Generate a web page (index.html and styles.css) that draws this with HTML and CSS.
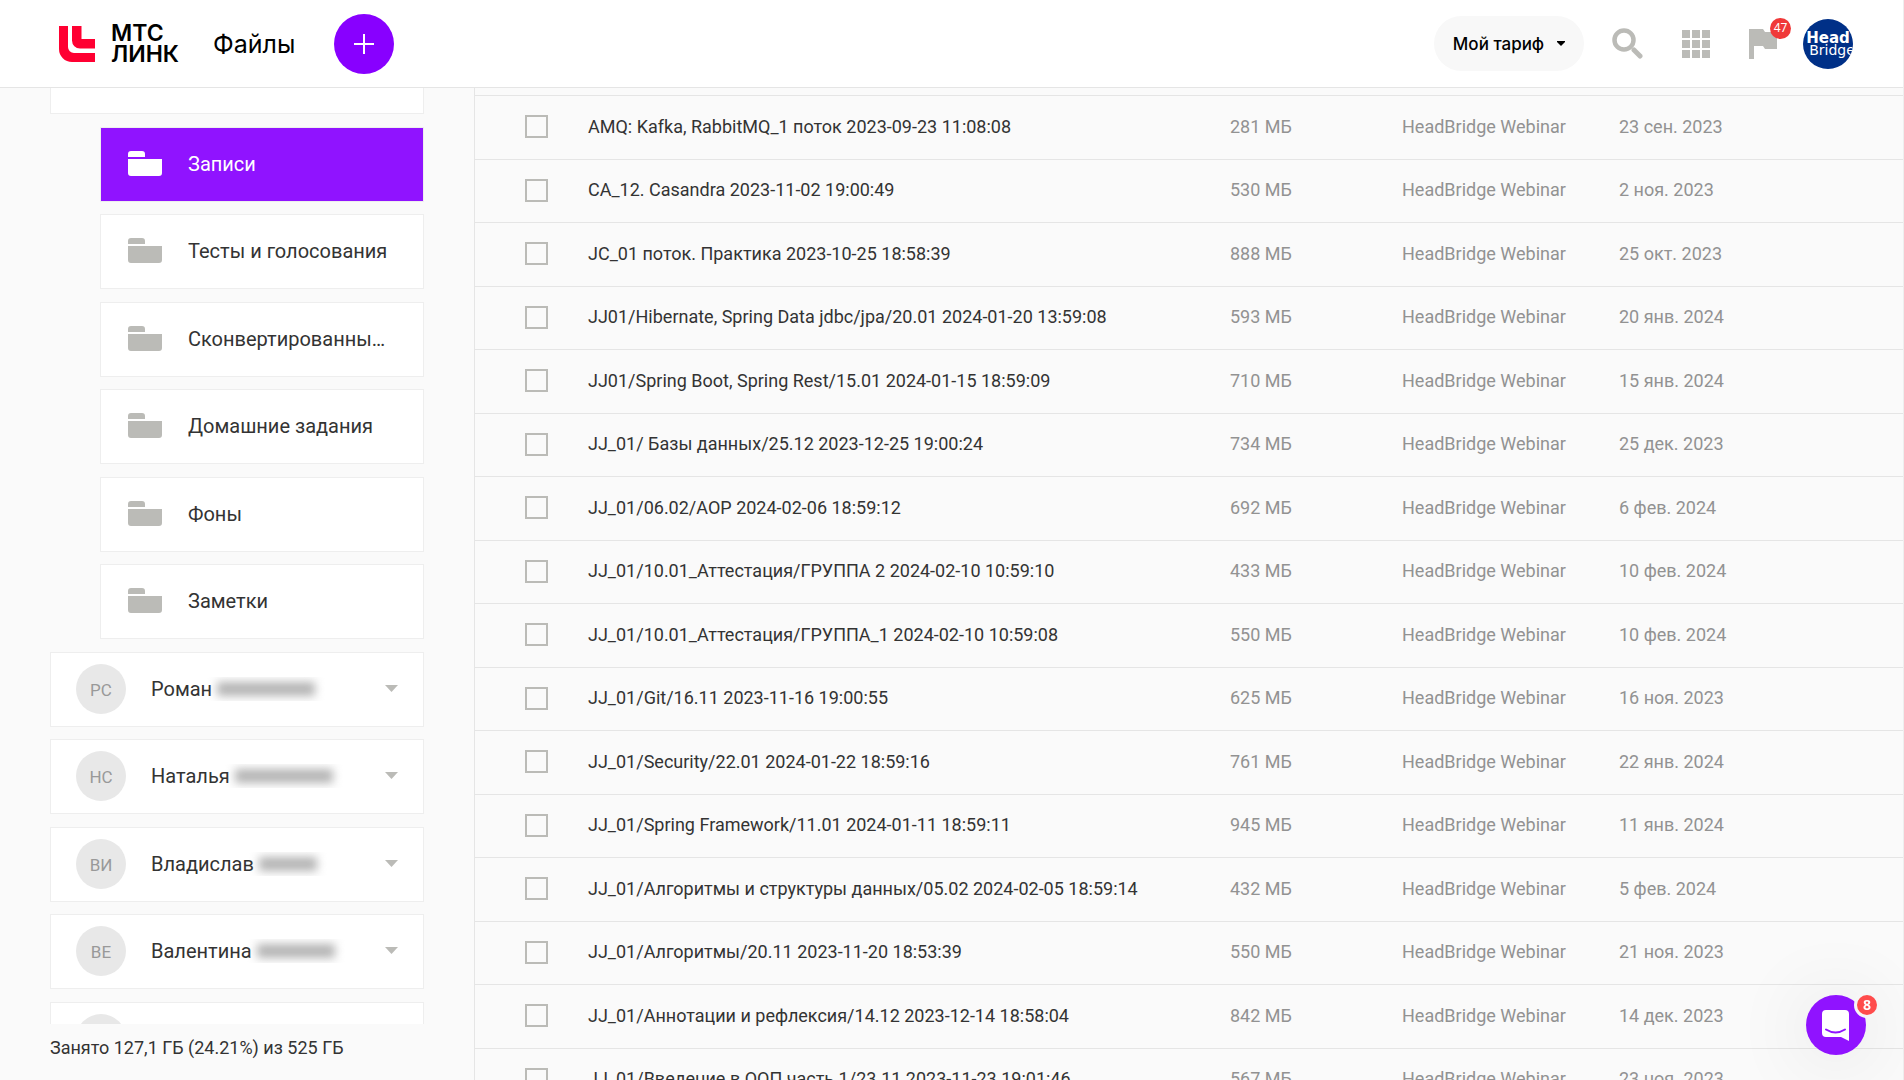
FILE: index.html
```html
<!DOCTYPE html>
<html lang="ru">
<head>
<meta charset="utf-8">
<meta name="viewport" content="width=device-width, initial-scale=1">
<title>Файлы</title>
<link rel="stylesheet" href="styles.css">
</head>
<body>
<svg class="sprite" aria-hidden="true">
  <symbol id="folder" viewBox="0 0 34 25"><path d="M0 6V3a3 3 0 0 1 3-3h11a3 3 0 0 1 3 3v3zM0 8h34v14a3 3 0 0 1-3 3H3a3 3 0 0 1-3-3z"/></symbol>
  <symbol id="caret" viewBox="0 0 13 7"><path d="M0 0h13L6.500 7z"/></symbol>
</svg>

<header class="topbar">
  <a class="logo" href="#">
    <svg class="logo-mark" viewBox="0 0 36 36" aria-hidden="true"><path d="M0 0h9v21a6 6 0 0 0 6 6h21v9H13A13 13 0 0 1 0 23zM13 0h9.500v13H36v9.500H21a8 8 0 0 1-8-8z"/></svg>
    <span class="logo-text">МТС<br>ЛИНК</span>
  </a>
  <h1 class="title">Файлы</h1>
  <button class="add" type="button" aria-label="Добавить"><svg viewBox="0 0 20 20" aria-hidden="true"><path d="M10 0v20M0 10h20"/></svg></button>
  <div class="tools">
    <button class="plan" type="button">Мой тариф <svg viewBox="0 0 8 5" aria-hidden="true"><path d="M0 0h8v1L4 5 0 1z"/></svg></button>
    <button class="tool" type="button" aria-label="Поиск"><svg width="31" height="31" viewBox="0 0 31 31" aria-hidden="true"><circle cx="12" cy="12" r="9.500" fill="none" stroke="currentColor" stroke-width="4.500"/><path d="M22 22l6 6" stroke="currentColor" stroke-width="5" stroke-linecap="round"/></svg></button>
    <button class="tool" type="button" aria-label="Сервисы"><svg width="28" height="28" viewBox="0 0 28 28" aria-hidden="true"><path fill="currentColor" d="M0 0h8v8H0zM10 0h8v8h-8zM20 0h8v8h-8zM0 10h8v8H0zM10 10h8v8h-8zM20 10h8v8h-8zM0 20h8v8H0zM10 20h8v8h-8zM20 20h8v8h-8z"/></svg></button>
    <button class="tool flag" type="button" aria-label="Уведомления"><svg width="28" height="30" viewBox="0 0 28 30" aria-hidden="true"><path fill="currentColor" d="M0 0h14l2 3h12v17H16l-2-3H5v13H0z"/></svg><span class="badge">47</span></button>
    <a class="profile" href="#"><span class="profile-head">Head</span><span class="profile-bridge">Bridge</span></a>
  </div>
</header>

<div class="content">
  <aside class="sidebar">
    <div class="viewport">
      <nav class="tree">
        <a class="card root" href="#" aria-label="Файлы"><svg class="folder"><use href="#folder"/></svg></a>
        <a class="card nested active" href="#"><svg class="folder"><use href="#folder"/></svg><span class="name">Записи</span></a>
        <a class="card nested" href="#"><svg class="folder"><use href="#folder"/></svg><span class="name">Тесты и голосования</span></a>
        <a class="card nested" href="#"><svg class="folder"><use href="#folder"/></svg><span class="name">Сконвертированные файлы</span></a>
        <a class="card nested" href="#"><svg class="folder"><use href="#folder"/></svg><span class="name">Домашние задания</span></a>
        <a class="card nested" href="#"><svg class="folder"><use href="#folder"/></svg><span class="name">Фоны</span></a>
        <a class="card nested" href="#"><svg class="folder"><use href="#folder"/></svg><span class="name">Заметки</span></a>
        <a class="card" href="#"><span class="avatar">РС</span><span class="name">Роман <i class="veil wide"></i></span><svg class="caret"><use href="#caret"/></svg></a>
        <a class="card" href="#"><span class="avatar">НС</span><span class="name">Наталья <i class="veil wide"></i></span><svg class="caret"><use href="#caret"/></svg></a>
        <a class="card" href="#"><span class="avatar">ВИ</span><span class="name">Владислав <i class="veil short"></i></span><svg class="caret"><use href="#caret"/></svg></a>
        <a class="card" href="#"><span class="avatar">ВЕ</span><span class="name">Валентина <i class="veil"></i></span><svg class="caret"><use href="#caret"/></svg></a>
        <a class="card" href="#"><span class="avatar"></span></a>
      </nav>
    </div>
    <p class="storage">Занято 127,1 ГБ (24.21%) из 525 ГБ</p>
  </aside>

  <main class="files">
    <table class="list">
      <colgroup><col class="c-check"><col><col class="c-size"><col class="c-owner"><col class="c-date"></colgroup>
      <tbody>
        <tr><td><input type="checkbox" aria-labelledby="f1"></td><th scope="row" id="f1">AMQ: Kafka, RabbitMQ_1 поток 2023-09-23 11:08:08</th><td>281 МБ</td><td>HeadBridge Webinar</td><td>23 сен. 2023</td></tr>
        <tr><td><input type="checkbox" aria-labelledby="f2"></td><th scope="row" id="f2">CA_12. Casandra 2023-11-02 19:00:49</th><td>530 МБ</td><td>HeadBridge Webinar</td><td>2 ноя. 2023</td></tr>
        <tr><td><input type="checkbox" aria-labelledby="f3"></td><th scope="row" id="f3">JC_01 поток. Практика 2023-10-25 18:58:39</th><td>888 МБ</td><td>HeadBridge Webinar</td><td>25 окт. 2023</td></tr>
        <tr><td><input type="checkbox" aria-labelledby="f4"></td><th scope="row" id="f4">JJ01/Hibernate, Spring Data jdbc/jpa/20.01 2024-01-20 13:59:08</th><td>593 МБ</td><td>HeadBridge Webinar</td><td>20 янв. 2024</td></tr>
        <tr><td><input type="checkbox" aria-labelledby="f5"></td><th scope="row" id="f5">JJ01/Spring Boot, Spring Rest/15.01 2024-01-15 18:59:09</th><td>710 МБ</td><td>HeadBridge Webinar</td><td>15 янв. 2024</td></tr>
        <tr><td><input type="checkbox" aria-labelledby="f6"></td><th scope="row" id="f6">JJ_01/ Базы данных/25.12 2023-12-25 19:00:24</th><td>734 МБ</td><td>HeadBridge Webinar</td><td>25 дек. 2023</td></tr>
        <tr><td><input type="checkbox" aria-labelledby="f7"></td><th scope="row" id="f7">JJ_01/06.02/АОР 2024-02-06 18:59:12</th><td>692 МБ</td><td>HeadBridge Webinar</td><td>6 фев. 2024</td></tr>
        <tr><td><input type="checkbox" aria-labelledby="f8"></td><th scope="row" id="f8">JJ_01/10.01_Аттестация/ГРУППА 2 2024-02-10 10:59:10</th><td>433 МБ</td><td>HeadBridge Webinar</td><td>10 фев. 2024</td></tr>
        <tr><td><input type="checkbox" aria-labelledby="f9"></td><th scope="row" id="f9">JJ_01/10.01_Аттестация/ГРУППА_1 2024-02-10 10:59:08</th><td>550 МБ</td><td>HeadBridge Webinar</td><td>10 фев. 2024</td></tr>
        <tr><td><input type="checkbox" aria-labelledby="f10"></td><th scope="row" id="f10">JJ_01/Git/16.11 2023-11-16 19:00:55</th><td>625 МБ</td><td>HeadBridge Webinar</td><td>16 ноя. 2023</td></tr>
        <tr><td><input type="checkbox" aria-labelledby="f11"></td><th scope="row" id="f11">JJ_01/Security/22.01 2024-01-22 18:59:16</th><td>761 МБ</td><td>HeadBridge Webinar</td><td>22 янв. 2024</td></tr>
        <tr><td><input type="checkbox" aria-labelledby="f12"></td><th scope="row" id="f12">JJ_01/Spring Framework/11.01 2024-01-11 18:59:11</th><td>945 МБ</td><td>HeadBridge Webinar</td><td>11 янв. 2024</td></tr>
        <tr><td><input type="checkbox" aria-labelledby="f13"></td><th scope="row" id="f13">JJ_01/Алгоритмы и структуры данных/05.02 2024-02-05 18:59:14</th><td>432 МБ</td><td>HeadBridge Webinar</td><td>5 фев. 2024</td></tr>
        <tr><td><input type="checkbox" aria-labelledby="f14"></td><th scope="row" id="f14">JJ_01/Алгоритмы/20.11 2023-11-20 18:53:39</th><td>550 МБ</td><td>HeadBridge Webinar</td><td>21 ноя. 2023</td></tr>
        <tr><td><input type="checkbox" aria-labelledby="f15"></td><th scope="row" id="f15">JJ_01/Аннотации и рефлексия/14.12 2023-12-14 18:58:04</th><td>842 МБ</td><td>HeadBridge Webinar</td><td>14 дек. 2023</td></tr>
        <tr><td><input type="checkbox" aria-labelledby="f16"></td><th scope="row" id="f16">JJ_01/Введение в ООП часть 1/23.11 2023-11-23 19:01:46</th><td>567 МБ</td><td>HeadBridge Webinar</td><td>23 ноя. 2023</td></tr>
      </tbody>
    </table>
  </main>
</div>

<button class="chat" type="button" aria-label="Чат поддержки"><svg width="28" height="31" viewBox="0 0 28 31" aria-hidden="true"><path fill="#fff" d="M4 0h19a4 4 0 0 1 4 4v27l-8-4H4a4 4 0 0 1-4-4V4a4 4 0 0 1 4-4z"/><path fill="none" stroke="#9013ff" stroke-width="2" stroke-linecap="round" d="M4 19.500q9.500 6 19 0"/></svg><span class="chat-badge">8</span></button>
</body>
</html>
```
FILE: styles.css
```css
* { box-sizing: border-box; }

body {
  margin: 0;
  height: 100vh;
  display: flex;
  flex-direction: column;
  overflow: hidden;
  border-right: 1px solid #eee;
  background: #fafafa;
  color: #333;
  font: 400 18px/24px Roboto, "Noto Sans", sans-serif;
}

button { margin: 0; padding: 0; border: 0; background: none; font: inherit; cursor: pointer; }
a { color: inherit; text-decoration: none; }
.sprite { display: none; }

/* Top bar */
.topbar {
  flex: none;
  height: 88px;
  display: flex;
  align-items: center;
  padding: 0 50px 0 59px;
  background: #fff;
  border-bottom: 1px solid #e5e5e5;
  color: #000;
  font-family: Inter, "Noto Sans", sans-serif;
}
.logo { display: flex; align-items: center; gap: 16px; width: 154px; }
.logo-mark { width: 36px; height: 36px; fill: #ff0032; }
.logo-text { font-size: 23px; line-height: 21px; font-weight: 600; }
.title { margin: 0; width: 121px; font-size: 25px; line-height: 32px; font-weight: 400; }
.add {
  width: 60px;
  height: 60px;
  display: grid;
  place-items: center;
  border-radius: 50%;
  background: #80f;
}
.add svg { width: 20px; height: 20px; stroke: #fff; stroke-width: 2; }
.tools { margin-left: auto; display: flex; align-items: center; }
.plan {
  width: 150px;
  height: 55px;
  margin-right: 28px;
  display: flex;
  align-items: center;
  justify-content: center;
  gap: 13px;
  border-radius: 28px;
  background: #f8f8f8;
  color: #000;
  font-size: 17px;
  font-weight: 500;
}
.plan svg { width: 8px; height: 5px; }
.tool { color: #bbbbb7; margin-right: 39px; }
.tool svg { display: block; }
.flag { position: relative; margin-right: 26px; }
.badge {
  position: absolute;
  top: -11px;
  right: -14px;
  width: 21px;
  height: 21px;
  border-radius: 50%;
  background: #f03939;
  color: #fff;
  font: 400 12px/20px "Noto Sans", sans-serif;
  text-align: center;
}
.profile {
  width: 50px;
  height: 50px;
  display: flex;
  flex-direction: column;
  align-items: center;
  justify-content: center;
  border-radius: 50%;
  background: #003087;
  color: #fff;
  font: 400 14px/12px "DejaVu Sans", sans-serif;
  overflow: hidden;
}
.profile-head { font-weight: 700; font-size: 15px; }
.profile-bridge { padding-left: 8px; }

/* Folder tree */
.content { flex: 1; min-height: 0; display: flex; }
.sidebar { flex: none; width: 474px; display: flex; flex-direction: column; padding: 0 50px; }
.viewport { flex: 1; min-height: 0; overflow: hidden; }
.tree { margin-top: -49px; }
.card {
  height: 75px;
  margin-bottom: 12px;
  display: flex;
  align-items: center;
  gap: 25px;
  padding: 0 25px 2px;
  border: 1px solid #eee;
  background: #fff;
  font-size: 20px;
}
.card:nth-child(odd) { margin-bottom: 13px; }
.nested { margin-left: 50px; padding: 0 32px 2px 27px; gap: 26px; }
.active { background: #9013ff; background-clip: padding-box; color: #fff; }
.folder { flex: none; width: 34px; height: 25px; fill: #bbbbb7; }
.active .folder { fill: #fff; }
.name { flex: 1; min-width: 0; overflow: hidden; text-overflow: ellipsis; white-space: nowrap; }
.avatar {
  flex: none;
  width: 50px;
  height: 50px;
  border-radius: 50%;
  background: #e8e8e8;
  color: #999;
  font-size: 17px;
  line-height: 52px;
  text-align: center;
}
.caret { flex: none; width: 13px; height: 7px; fill: #bbbbb7; }
.veil { display: inline-block; width: 78px; height: 14px; background: #b4b4b4; filter: blur(5px); }
.veil.wide { width: 98px; }
.veil.short { width: 58px; }
.storage { margin: 0; height: 56px; line-height: 48px; white-space: nowrap; }

/* File list */
.files { flex: 1; min-width: 0; overflow: hidden; border-left: 1px solid #e5e5e5; padding-top: 7px; }
.list { width: 100%; table-layout: fixed; border-spacing: 0; }
.c-check { width: 113px; }
.c-size { width: 172px; }
.c-owner { width: 217px; }
.c-date { width: 284px; }
.list tr { height: 64px; }
.list tr:nth-child(even) { height: 63px; }
.list td, .list th {
  padding: 0 0 2px;
  border-top: 1px solid #e5e5e5;
  text-align: left;
  white-space: nowrap;
  font-weight: 400;
  color: #929292;
}
.list th { color: #333; }
.list input {
  appearance: none;
  display: block;
  width: 23px;
  height: 23px;
  margin: 0 0 0 50px;
  border: 2px solid #bbbbb7;
}

/* Support chat launcher */
.chat {
  position: fixed;
  right: 38px;
  bottom: 25px;
  width: 60px;
  height: 60px;
  display: grid;
  place-items: center;
  border-radius: 50%;
  background: #9013ff;
  box-shadow: 0 4px 80px rgba(0, 0, 0, .12);
}
.chat-badge {
  position: absolute;
  top: -3px;
  right: -14px;
  width: 26px;
  height: 26px;
  border: 3px solid #f6f6f6;
  border-radius: 50%;
  background: #ff4c4c;
  color: #fff;
  font: 700 14px/20px "Open Sans", sans-serif;
  text-align: center;
}
```
